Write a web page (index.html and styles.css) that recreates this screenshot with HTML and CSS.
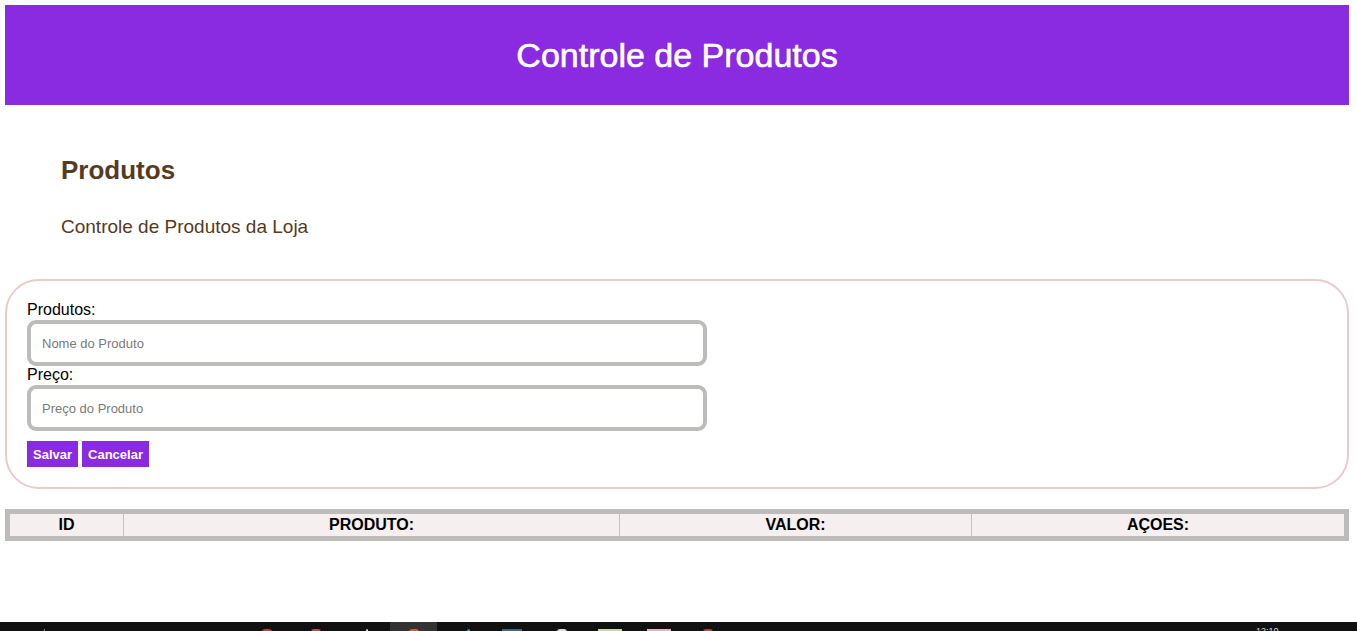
FILE: index.html
```html
<!DOCTYPE html>
<html lang="pt-BR">
<head>
<meta charset="utf-8">
<title>Controle de Produtos</title>
<link rel="stylesheet" href="styles.css">
</head>
<body>
<div class="page">
  <header class="topbar">
    <h1 class="topbar-title">Controle de Produtos</h1>
  </header>

  <section class="intro">
    <h2 class="intro-title">Produtos</h2>
    <p class="intro-sub">Controle de Produtos da Loja</p>
  </section>

  <form class="product-form">
    <label class="field-label" for="nome">Produtos:</label>
    <input class="field-input" id="nome" type="text" placeholder="Nome do Produto">
    <label class="field-label" for="preco">Preço:</label>
    <input class="field-input" id="preco" type="text" placeholder="Preço do Produto">
    <div class="actions">
      <button type="button" class="btn">Salvar</button>
      <button type="button" class="btn">Cancelar</button>
    </div>
  </form>

  <table class="products">
    <colgroup>
      <col class="c-id">
      <col class="c-prod">
      <col class="c-val">
      <col class="c-act">
    </colgroup>
    <thead>
      <tr>
        <th>ID</th>
        <th>PRODUTO:</th>
        <th>VALOR:</th>
        <th>AÇOES:</th>
      </tr>
    </thead>
  </table>
</div>

<div class="taskbar">
  <span class="tb-mark tb-grey" style="left:44px"></span>
  <span class="tb-dot tb-red" style="left:262px"></span>
  <span class="tb-dot tb-red2" style="left:311px"></span>
  <span class="tb-dot tb-yellow" style="left:366px"></span>
  <span class="tb-active"></span>
  <span class="tb-dot tb-orange" style="left:409px"></span>
  <span class="tb-dot tb-blue" style="left:467px"></span>
  <span class="tb-dot tb-steel" style="left:502px"></span>
  <span class="tb-dot tb-white" style="left:557px"></span>
  <span class="tb-dot tb-green" style="left:598px"></span>
  <span class="tb-dot tb-pink" style="left:647px"></span>
  <span class="tb-dot tb-red" style="left:703px"></span>
  <span class="tb-time">12:10</span>
</div>
</body>
</html>
```

FILE: styles.css
```css
html, body {
  margin: 0;
  padding: 0;
  background: #ffffff;
}

body {
  font-family: "Liberation Sans", Arial, sans-serif;
  color: #000;
}

.page {
  width: 1344px;
  padding: 5px 0 0 5px;
}

.topbar {
  height: 100px;
  background: #8a2be2;
  display: flex;
  align-items: center;
  justify-content: center;
}

.topbar-title {
  margin: 0;
  color: #ffffff;
  font-size: 34px;
  font-weight: normal;
  line-height: 1;
  -webkit-text-stroke: 0.6px #ffffff;
}

.intro {
  padding: 50px 0 0 56px;
  color: #553b1f;
}

.intro-title {
  margin: 0;
  font-size: 26px;
  line-height: 30px;
  font-weight: bold;
}

.intro-sub {
  margin: 31px 0 0;
  font-size: 19px;
  line-height: 22px;
}

.product-form {
  margin-top: 41px;
  border: 2px solid #ebcaca;
  border-radius: 34px;
  padding: 20px 20px 20px 20px;
  display: flex;
  flex-direction: column;
  align-items: flex-start;
}

.field-label {
  font-size: 16px;
  line-height: 18px;
}

.field-input {
  box-sizing: border-box;
  width: 680px;
  height: 46px;
  margin: 1px 0 0 0;
  border: 4px solid #bdbcbb;
  border-radius: 9px;
  padding: 0 11px;
  font-family: "Liberation Sans", Arial, sans-serif;
  font-size: 13px;
  color: #333;
  background: #fff;
  outline: none;
}

.field-input::placeholder {
  color: #7a7a7a;
}

.actions {
  display: flex;
  gap: 4px;
  margin-top: 10px;
}

.btn {
  height: 26px;
  padding: 0 6px;
  border: none;
  background: #8a2be2;
  color: #fff;
  font-family: "Liberation Sans", Arial, sans-serif;
  font-weight: bold;
  font-size: 13px;
  cursor: pointer;
}

.products {
  margin-top: 20px;
  width: 1344px;
  border-collapse: collapse;
  border: 5px solid #bdbcbb;
  table-layout: fixed;
}

.c-id { width: 116px; }
.c-prod { width: 496px; }
.c-val { width: 352px; }
.c-act { width: auto; }

.products th {
  background: #f5efef;
  border-left: 1px solid #c5c3c3;
  height: 22px;
  padding: 0;
  font-size: 16px;
  font-weight: bold;
  text-align: center;
  color: #000;
}

.products th:first-child {
  border-left: none;
}

.taskbar {
  position: fixed;
  left: 0;
  right: 0;
  bottom: 0;
  height: 9px;
  background: #111111;
  overflow: hidden;
}

.tb-active {
  position: absolute;
  left: 390px;
  top: 0;
  width: 47px;
  height: 9px;
  background: #333333;
}

.tb-dot {
  position: absolute;
  top: 7px;
  width: 10px;
  height: 4px;
  border-radius: 3px 3px 0 0;
}

.tb-mark {
  position: absolute;
  top: 7px;
  width: 1px;
  height: 2px;
}

.tb-grey { background: #888; }
.tb-red { background: #e0302a; }
.tb-red2 { background: #d8403a; }
.tb-yellow { background: #e8d23a; width: 2px; }
.tb-orange { background: #e05a20; }
.tb-blue { background: #2a8ad8; width: 3px; }
.tb-steel { background: #3a6a8a; width: 20px; border-radius: 0; }
.tb-white { background: #dddddd; }
.tb-green { background: #bde0a0; width: 24px; border-radius: 0; }
.tb-pink { background: #e8b0c0; width: 24px; border-radius: 0; }

.tb-time {
  position: absolute;
  left: 1256px;
  top: 5px;
  color: #ddd;
  font-size: 9px;
  line-height: 9px;
}
```
